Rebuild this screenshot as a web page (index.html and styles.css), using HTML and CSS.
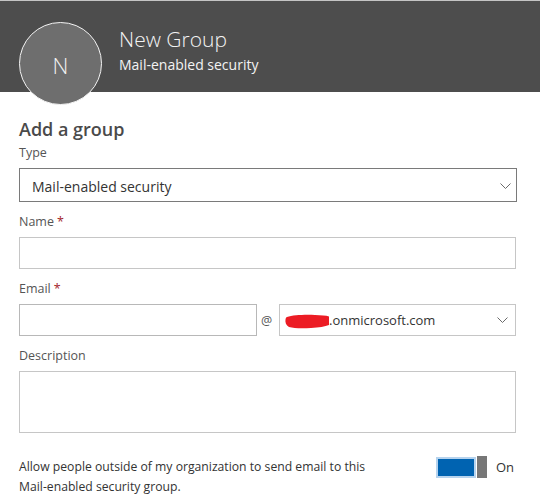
FILE: index.html
```html
<!DOCTYPE html>
<html>
<head>
<meta charset="utf-8">
<link rel="stylesheet" href="styles.css">
</head>
<body>
<header class="hdr">
  <div class="avatar">N</div>
  <div class="titles">
    <div class="title">New Group</div>
    <div class="sub">Mail-enabled security</div>
  </div>
</header>
<main class="form">
  <h1 class="heading">Add a group</h1>
  <div class="fields">
    <div class="field">
      <div class="label">Type</div>
      <div class="select select-type">
        <span class="select-text">Mail-enabled security</span>
        <svg class="chev" width="11" height="6" viewBox="0 0 11 6"><polyline points="0.5,0.5 5.5,5.5 10.5,0.5" fill="none" stroke="#6a6a6a" stroke-width="1"/></svg>
      </div>
    </div>
    <div class="field">
      <div class="label">Name<span class="req">*</span></div>
      <div class="input input-name"></div>
    </div>
    <div class="field">
      <div class="label">Email<span class="req">*</span></div>
      <div class="email-row">
        <div class="input input-email"></div>
        <div class="at">@</div>
        <div class="select select-domain">
          <span class="domain">
            <svg class="redact" width="45" height="15" viewBox="0 0 45 15"><path d="M2 3 C8 1 20 0.5 30 1 C36 1.2 41 1.5 44 2.5 L44 11 C40 12.5 34 13.5 26 14 C18 14.5 9 14.5 4 13 C1 11.5 0 8 0.5 5.5 C0.8 4 1.2 3.3 2 3 Z" fill="#ec1c24"/></svg><span class="domain-text">.onmicrosoft.com</span>
          </span>
          <svg class="chev" width="11" height="6" viewBox="0 0 11 6"><polyline points="0.5,0.5 5.5,5.5 10.5,0.5" fill="none" stroke="#6a6a6a" stroke-width="1"/></svg>
        </div>
      </div>
    </div>
    <div class="field">
      <div class="label">Description</div>
      <div class="input input-desc"></div>
    </div>
  </div>
  <div class="toggle-row">
    <div class="toggle-text">Allow people outside of my organization to send email to this<br>Mail-enabled security group.</div>
    <div class="toggle">
      <div class="track"></div>
      <div class="knob"></div>
      <div class="toggle-label">On</div>
    </div>
  </div>
</main>
</body>
</html>
```
FILE: styles.css
```css
* { box-sizing: border-box; }
html, body { margin: 0; padding: 0; background: #ffffff; }
body {
  font-family: "Open Sans", "Noto Sans", "Liberation Sans", sans-serif;
  color: #333333;
  width: 540px;
  height: 503px;
  overflow: hidden;
}
.hdr {
  height: 92px;
  background: #4d4d4d;
  border-top: 1px solid #c4c4c4;
  display: flex;
  align-items: flex-start;
  padding-left: 19px;
}
.avatar {
  flex: none;
  width: 83px;
  height: 83px;
  margin-top: 21px;
  border-radius: 50%;
  background: #6e6e6e;
  border: 1.5px solid #f4f4f4;
  color: #f2f2f2;
  font-weight: 300;
  font-size: 22px;
  display: flex;
  align-items: center;
  justify-content: center;
  padding-top: 2px;
  position: relative;
  z-index: 1;
}
.titles {
  margin-left: 17px;
  margin-top: 25px;
  color: #f3f3f3;
}
.title {
  font-size: 21px;
  font-weight: 300;
  line-height: 26px;
}
.sub {
  font-size: 14px;
  font-weight: 400;
  line-height: 20px;
  margin-top: 3px;
}
.form {
  padding: 25px 23px 0 19px;
}
.heading {
  margin: 0;
  font-size: 18px;
  font-weight: 600;
  line-height: 24px;
  color: #4a4a4a;
}
.fields {
  margin-top: 4px;
  display: flex;
  flex-direction: column;
  gap: 12px;
}
.label {
  font-size: 12.5px;
  line-height: 16px;
  color: #555555;
  margin-bottom: 7px;
}
.req {
  color: #a4262c;
  margin-left: 3px;
}
.select {
  display: flex;
  align-items: center;
  justify-content: space-between;
  background: #ffffff;
}
.select-type {
  height: 34px;
  border: 1px solid #7a7a7a;
  padding: 2px 5px 0 12px;
  font-size: 14px;
  color: #333333;
}
.chev { flex: none; }
.input {
  border: 1px solid #c6c6c6;
  background: #ffffff;
}
.input-name { height: 32px; margin-right: 1px; }
.input-desc { height: 62px; margin-right: 1px; }
.email-row {
  display: grid;
  grid-template-columns: 238px 22px 237px;
  align-items: center;
}
.input-email { height: 32px; border-color: #b8b8b8; }
.at {
  font-size: 12.5px;
  color: #555555;
  text-align: center;
  padding-right: 3px;
}
.select-domain {
  height: 32px;
  border: 1px solid #c6c6c6;
  padding: 0 7px 0 5px;
}
.domain {
  display: flex;
  align-items: center;
}
.redact { display: block; margin-top: 2px; }
.domain-text {
  font-size: 13px;
  color: #333333;
  margin-left: -1px;
}
.toggle-row {
  margin-top: 24px;
  display: flex;
  align-items: flex-start;
}
.toggle-text {
  font-size: 12.2px;
  line-height: 20px;
  color: #333333;
}
.toggle {
  margin-left: auto;
  display: flex;
  align-items: center;
  width: 81px;
  margin-top: -1px;
}
.track {
  width: 40px;
  height: 21px;
  background: #0063b1;
  border: 2px solid #b6d3ee;
  margin-top: 1px;
}
.knob {
  width: 10px;
  height: 22px;
  background: #777777;
  margin-left: 1px;
}
.toggle-label {
  margin-left: 9px;
  font-size: 13px;
  color: #333333;
}
```
